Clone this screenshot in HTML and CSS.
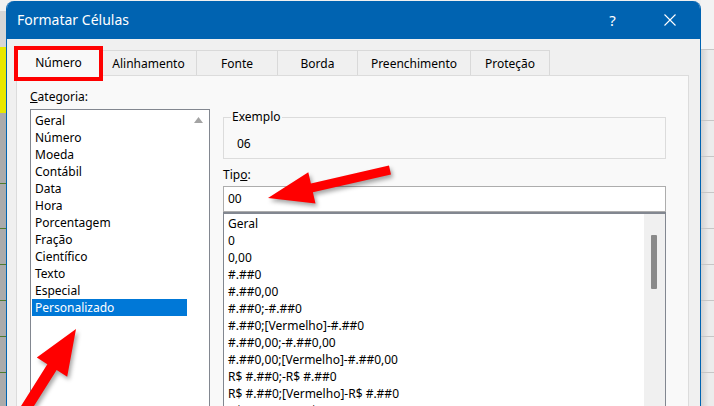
FILE: index.html
```html
<!DOCTYPE html>
<html lang="pt-BR">
<head>
<meta charset="utf-8">
<title>Formatar Células</title>
<link rel="stylesheet" href="styles.css">
</head>
<body>
<div class="screen">
  <div class="xl-left"></div>
  <div class="dialog">
    <div class="titlebar">
      <span class="title">Formatar Células</span>
      <span class="tbtn help">?</span>
      <span class="tbtn">
        <svg class="close-ico" width="12" height="12" viewBox="0 0 12 12"><path d="M0.5 0.5L11.5 11.5M11.5 0.5L0.5 11.5" stroke="#fff" stroke-width="1.1" fill="none"/></svg>
      </span>
    </div>
    <div class="body">
      <div class="tabs">
        <div class="tab tab-num active">Número<span class="redbox"></span></div>
        <div class="tab tab-ali">Alinhamento</div>
        <div class="tab tab-fon">Fonte</div>
        <div class="tab tab-bor">Borda</div>
        <div class="tab tab-pre">Preenchimento</div>
        <div class="tab tab-pro">Proteção</div>
      </div>
      <div class="panel">
        <div class="col-left">
          <div class="label"><u>C</u>ategoria:</div>
          <div class="catlist">
            <ul class="cat-items">
              <li>Geral</li>
              <li>Número</li>
              <li>Moeda</li>
              <li>Contábil</li>
              <li>Data</li>
              <li>Hora</li>
              <li>Porcentagem</li>
              <li>Fração</li>
              <li>Científico</li>
              <li>Texto</li>
              <li>Especial</li>
              <li class="sel">Personalizado</li>
            </ul>
            <div class="cat-scroll">
              <svg width="9" height="6" viewBox="0 0 9 6"><polygon points="0,6 4.5,0 9,6" fill="#a3a3a3"/></svg>
            </div>
          </div>
        </div>
        <div class="col-right">
          <fieldset class="sample">
            <legend>Exemplo</legend>
            <div class="sample-val">06</div>
          </fieldset>
          <div class="label tipo-label">Tip<u>o</u>:</div>
          <div class="input">00</div>
          <div class="typelist">
            <ul class="type-items">
              <li>Geral</li>
              <li>0</li>
              <li>0,00</li>
              <li>#.##0</li>
              <li>#.##0,00</li>
              <li>#.##0;-#.##0</li>
              <li>#.##0;[Vermelho]-#.##0</li>
              <li>#.##0,00;-#.##0,00</li>
              <li>#.##0,00;[Vermelho]-#.##0,00</li>
              <li>R$ #.##0;-R$ #.##0</li>
              <li>R$ #.##0;[Vermelho]-R$ #.##0</li>
              <li>R$ #.##0,00;-R$ #.##0,00</li>
            </ul>
            <div class="type-scroll"><div class="thumb"></div></div>
          </div>
        </div>
      </div>
    </div>
  </div>
  <div class="xl-right"></div>
  <svg class="annot" width="714" height="406" viewBox="0 0 714 406">
    <polygon points="268,198 315.5,203.5 312.9,192.3 391,174.4 389,165.6 310.9,183.5 308.3,172.3" fill="#ff0000"/>
    <polygon points="76,329 67.2,376.7 56.65,370 29.65,412.9 20.35,407.1 47.35,364.2 36.8,357.5" fill="#ff0000"/>
  </svg>
</div>
</body>
</html>
```

FILE: styles.css
```css
body {
  margin: 0;
  font-family: "Noto Sans", "Open Sans", sans-serif;
  font-size: 12px;
  color: #000;
}

.screen {
  position: relative;
  width: 714px;
  height: 406px;
  overflow: hidden;
  display: flex;
  background: #f0f0f0;
}

.xl-left {
  width: 6px;
  flex: none;
  background:
    linear-gradient(#e8e800, #e8e800) 0 47px / 100% 66px no-repeat,
    linear-gradient(#4f7a2e, #4f7a2e) 0 183px / 100% 1px no-repeat,
    repeating-linear-gradient(to bottom, #4f7a2e 0 1px, transparent 1px 36px) 0 228px / 100% 200px no-repeat,
    linear-gradient(to bottom, #f0f0f0 0 11px, #d6d6d6 11px 47px, #ababab 47px);
}

.dialog {
  width: 695px;
  height: 440px;
  flex: none;
  margin-top: 1px;
  box-sizing: border-box;
  border-left: 1px solid #0063b1;
  border-right: 1px solid #0063b1;
  border-radius: 8px 8px 0 0;
  overflow: hidden;
  background: #f0f0f0;
  display: flex;
  flex-direction: column;
}

.titlebar {
  height: 38px;
  flex: none;
  background: #0063b1;
  color: #fff;
  display: flex;
  align-items: center;
  padding: 0 2px 0 10px;
}

.title {
  flex: 1;
  font-size: 14px;
  line-height: 38px;
}

.tbtn {
  width: 57px;
  height: 38px;
  display: flex;
  align-items: center;
  justify-content: center;
}

.help {
  font-size: 15px;
}

.body {
  flex: 1;
  display: flex;
  flex-direction: column;
  padding: 11px 11px 0 9px;
}

.tabs {
  display: flex;
  height: 25px;
  flex: none;
  position: relative;
  z-index: 1;
}

.tab {
  box-sizing: border-box;
  height: 25px;
  margin-left: -1px;
  border: 1px solid #d9d9d9;
  border-bottom: 0;
  background: #f0f0f0;
  display: flex;
  align-items: center;
  justify-content: center;
  white-space: nowrap;
}

.tab-num { width: 85px; margin-left: 0; }
.tab-ali { width: 97px; }
.tab-fon { width: 82px; }
.tab-bor { width: 81px; }
.tab-pre { width: 114px; }
.tab-pro { width: 80px; }

.tab.active {
  position: relative;
  z-index: 2;
  height: 28px;
  margin-top: -2px;
  padding-bottom: 1px;
  background: #f9f9f9;
}

.redbox {
  position: absolute;
  left: -3px;
  top: -3px;
  width: 89px;
  height: 35px;
  box-sizing: border-box;
  border: 4px solid #ff0000;
}

.panel {
  flex: 1;
  display: flex;
  gap: 13px;
  padding: 14px 22px 0 13px;
  border: 1px solid #dcdcdc;
  background: #f9f9f9;
}

.col-left {
  width: 180px;
  flex: none;
}

.col-right {
  width: 443px;
  flex: none;
  display: flex;
  flex-direction: column;
}

.label {
  line-height: 14px;
  height: 14px;
}

.catlist {
  margin-top: 5px;
  height: 320px;
  border: 1px solid #828790;
  background: #fff;
  display: flex;
}

.cat-items {
  flex: 1;
  margin: 0;
  padding: 2px 1px 1px;
  list-style: none;
}

.cat-items li {
  line-height: 17px;
  padding-left: 3px;
  white-space: nowrap;
}

.cat-items li.sel {
  background: #0078d7;
  color: #fff;
}

.cat-scroll {
  width: 21px;
  flex: none;
  display: flex;
  justify-content: center;
  align-items: flex-start;
  padding-top: 7px;
  box-sizing: border-box;
}

.sample {
  margin: 20px 0 0;
  padding: 13px 0 7px 7px;
  border: 1px solid #dcdcdc;
  min-width: 0;
}

.sample legend {
  padding: 0 1px;
  line-height: 14px;
}

.sample-val {
  padding-left: 6px;
  line-height: 14px;
}

.tipo-label {
  margin-top: 9px;
}

.input {
  margin-top: 4px;
  height: 26px;
  box-sizing: border-box;
  border: 1px solid #adadad;
  background: #fff;
  padding-left: 4px;
  line-height: 24px;
}

.typelist {
  height: 300px;
  flex: none;
  border: 1px solid #828790;
  border-top-width: 2px;
  background: #fff;
  display: flex;
}

.type-items {
  flex: 1;
  margin: 0;
  padding: 1px 0 0;
  list-style: none;
}

.type-items li {
  line-height: 17px;
  padding-left: 4px;
  white-space: nowrap;
}

.type-scroll {
  width: 21px;
  flex: none;
  background: #f0f0f0;
}

.thumb {
  width: 6px;
  height: 54px;
  margin: 21px 0 0 7px;
  background: #8a8a8a;
  border-radius: 1px;
}

.xl-right {
  flex: 1;
  background:
    linear-gradient(#c6c6c6, #c6c6c6) 0 49px / 100% 1px no-repeat,
    repeating-linear-gradient(to bottom, #c6c6c6 0 1px, transparent 1px 36px) 0 120px / 100% 300px no-repeat,
    linear-gradient(to right, #d2d2d2, #ececec 60%) 0 50px / 100% 400px no-repeat,
    #f3f3f3;
}

.annot {
  position: absolute;
  left: 0;
  top: 0;
  pointer-events: none;
  filter: drop-shadow(2px 3px 2px rgba(0, 0, 0, 0.35));
}
```
